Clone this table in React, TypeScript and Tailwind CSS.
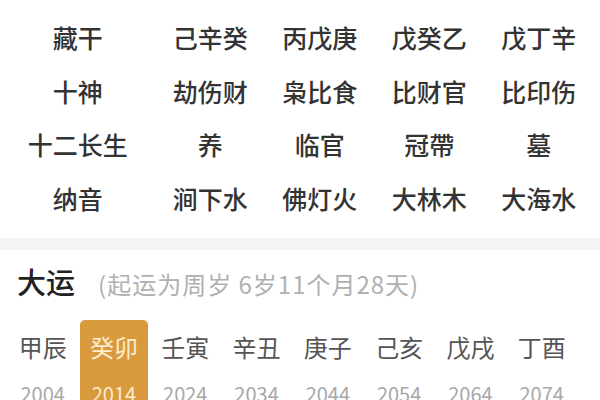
import React from "react";

const rows: string[][] = [
  ["藏干", "己辛癸", "丙戊庚", "戊癸乙", "戊丁辛"],
  ["十神", "劫伤财", "枭比食", "比财官", "比印伤"],
  ["十二长生", "养", "临官", "冠帶", "墓"],
  ["纳音", "涧下水", "佛灯火", "大林木", "大海水"],
];

const dayun = [
  { gz: "甲辰", y: "2004" },
  { gz: "癸卯", y: "2014", active: true },
  { gz: "壬寅", y: "2024" },
  { gz: "辛丑", y: "2034" },
  { gz: "庚子", y: "2044" },
  { gz: "己亥", y: "2054" },
  { gz: "戊戌", y: "2064" },
  { gz: "丁酉", y: "2074" },
];

export default function App() {
  return (
    <div
      className="w-[600px] h-[400px] overflow-hidden bg-white"
      style={{ fontFamily: '"Noto Sans CJK SC", "Noto Sans", sans-serif' }}
    >
      <div className="pt-[11px] h-[238px]">
        <div className="grid grid-cols-[155.5px_109.5px_109.5px_109.5px_109.5px]">
          {rows.map((r, i) =>
            r.map((c, j) => (
              <div
                key={i + "-" + j}
                className="h-[53.5px] flex items-center justify-center text-[25px] font-medium text-[#333333]"
              >
                {c}
              </div>
            ))
          )}
        </div>
      </div>
      <div className="h-[12px] bg-[#f5f5f7]" />
      <div className="pt-[11px] pl-[17px] h-[40px] flex items-baseline box-content">
        <span className="text-[29px] leading-[40px] font-medium text-[#222222]">大运</span>
        <span className="ml-[23px] text-[24px] leading-[40px] tracking-[1px] text-[#b0b0b0]">
          (起运为周岁 6岁11个月28天)
        </span>
      </div>
      <div className="mt-[19px] flex px-[7px]">
        {dayun.map((d) => (
          <div key={d.y} className="w-[71.3px] flex justify-center">
            <div
              className={
                "w-[68px] h-[100px] flex flex-col items-center pt-[10px] rounded-t-[5px] " +
                (d.active ? "bg-[#d99a3e]" : "")
              }
            >
              <div
                className={
                  "text-[24px] leading-[34px] " +
                  (d.active ? "text-[#fcecd0]" : "text-[#555555]")
                }
              >
                {d.gz}
              </div>
              <div
                className={
                  "mt-[16px] text-[20px] leading-[28px] " +
                  (d.active ? "text-[#fcecd0]" : "text-[#a8a8a8]")
                }
              >
                {d.y}
              </div>
            </div>
          </div>
        ))}
      </div>
    </div>
  );
}
